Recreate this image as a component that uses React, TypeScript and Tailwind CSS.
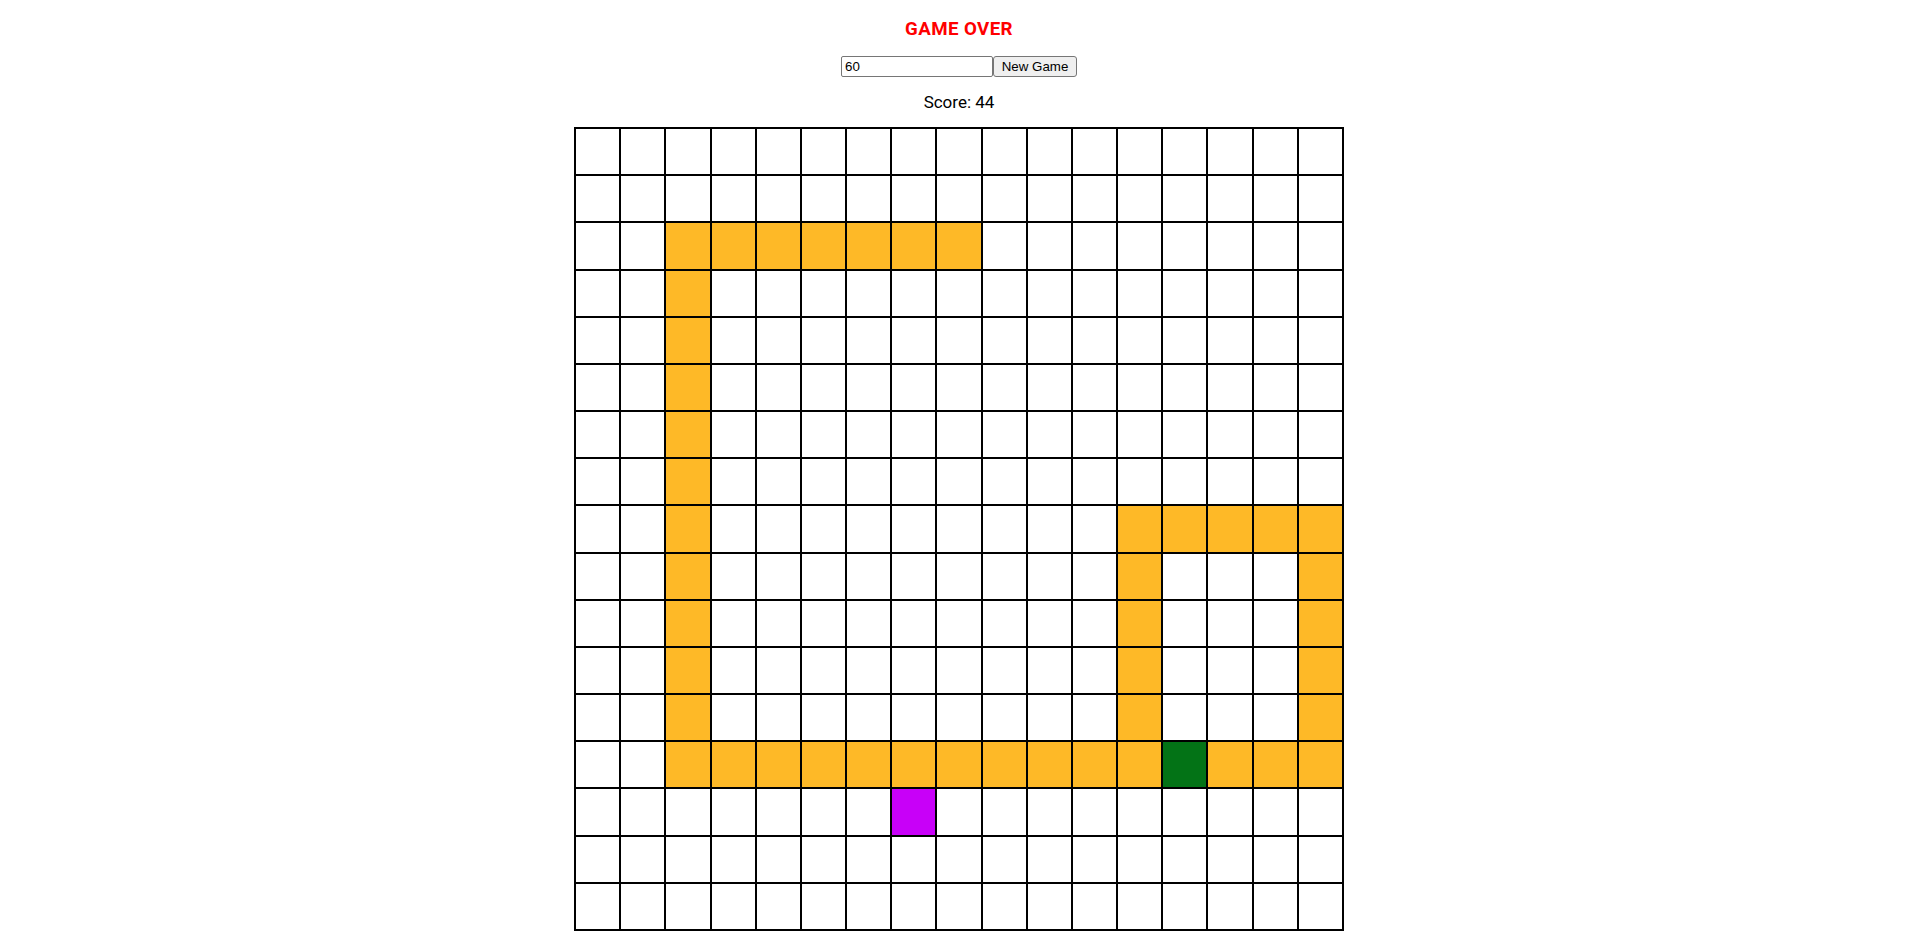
import React from "react";

const N = 17;

function cellColor(r: number, c: number): string {
  if (r === 13 && c === 13) return "bg-[#037316]";
  if (r === 14 && c === 7) return "bg-[#c800f8]";
  const orange =
    (r === 2 && c >= 2 && c <= 8) ||
    (c === 2 && r >= 2 && r <= 13) ||
    (r === 8 && c >= 12 && c <= 16) ||
    (r >= 8 && r <= 13 && (c === 12 || c === 16)) ||
    (r === 13 && c >= 2 && c <= 16);
  return orange ? "bg-[#feb927]" : "bg-white";
}

export default function App() {
  const cells: React.ReactNode[] = [];
  for (let r = 0; r < N; r++) {
    for (let c = 0; c < N; c++) {
      cells.push(
        <div key={`${r}-${c}`} className={`border border-black ${cellColor(r, c)}`} />
      );
    }
  }
  return (
    <div className="flex flex-col items-center bg-white min-h-[942px] text-black font-['Roboto',_'Liberation_Sans',_sans-serif]">
      <h3 className="mt-[18px] text-[18.72px] leading-[22px] font-bold tracking-[0.4px] text-[#ff0000]">GAME OVER</h3>
      <div className="mt-[16px] flex h-[21px] font-['Liberation_Sans',_Arial,_sans-serif] text-[13.33px]">
        <input
          defaultValue="60"
          className="w-[152px] h-[21px] border border-[#767676] rounded-[2px] pl-[3px] pr-[2px] text-[13.33px] text-black outline-none bg-white"
        />
        <button className="w-[84px] h-[21px] border border-[#767676] rounded-[3px] bg-[#efefef] text-[13.33px] leading-[15px] text-black">
          New Game
        </button>
      </div>
      <p className="mt-[15px] text-[17px] leading-[20px]">Score: 44</p>
      <div className="mt-[15px] w-[770px] h-[804px] border border-black grid grid-cols-[repeat(17,1fr)] grid-rows-[repeat(17,1fr)]">
        {cells}
      </div>
    </div>
  );
}
